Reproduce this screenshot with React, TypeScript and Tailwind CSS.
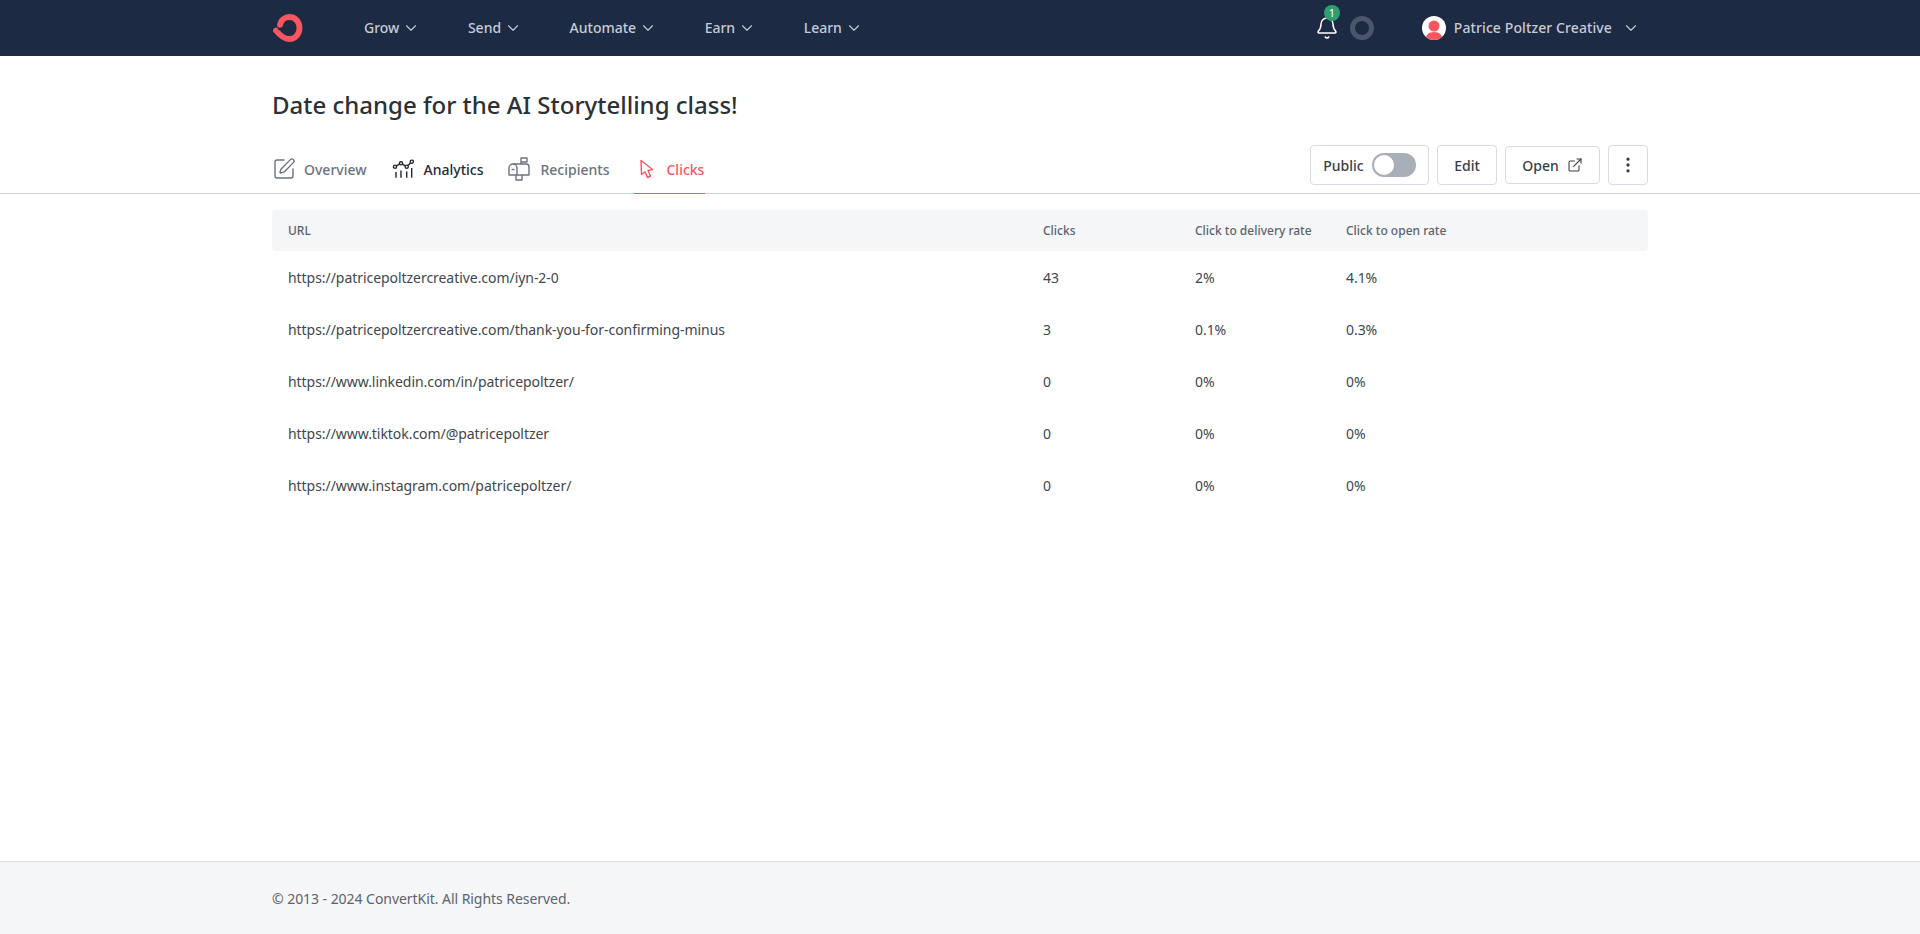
import React from 'react';
import { ChevronDown, Bell, SquarePen, MoreVertical, ExternalLink } from 'lucide-react';

const navItems = ['Grow', 'Send', 'Automate', 'Earn', 'Learn'];

const rows = [
  { url: 'https://patricepoltzercreative.com/iyn-2-0', clicks: '43', delivery: '2%', open: '4.1%' },
  { url: 'https://patricepoltzercreative.com/thank-you-for-confirming-minus', clicks: '3', delivery: '0.1%', open: '0.3%' },
  { url: 'https://www.linkedin.com/in/patricepoltzer/', clicks: '0', delivery: '0%', open: '0%' },
  { url: 'https://www.tiktok.com/@patricepoltzer', clicks: '0', delivery: '0%', open: '0%' },
  { url: 'https://www.instagram.com/patricepoltzer/', clicks: '0', delivery: '0%', open: '0%' },
];

function Logo() {
  return (
    <svg width="33" height="32" viewBox="0 0 33 32" fill="none">
      <path
        d="M8 13 C 9 7.500 13 5 17.500 5 C 23.500 5 27.500 10 27.500 16 C 27.500 22.500 23 27 17 27 C 12 27 8.500 24 4 18.500"
        stroke="#fb5660"
        strokeWidth="5.800"
        strokeLinecap="round"
        fill="none"
      />
      <path d="M11 15.800 L6.500 17" stroke="#1d2a44" strokeWidth="1.400" strokeLinecap="round" />
    </svg>
  );
}

function AnalyticsIcon() {
  return (
    <svg width="22" height="22" viewBox="0 0 22 22" fill="none" stroke="#1f2937" strokeWidth="1.4">
      <circle cx="3" cy="8.700" r="1.600" />
      <circle cx="9" cy="5.300" r="1.600" />
      <circle cx="14.700" cy="8.700" r="1.600" />
      <circle cx="19.800" cy="3.700" r="1.600" />
      <path d="M4.400 7.900 7.600 6.100M10.400 6.100l2.900 1.800M15.900 7.600l2.800-2.800" />
      <path d="M4 14v5.700M9 12.500v7.200M14.700 13.500v6.200M19.700 10v9.700" />
    </svg>
  );
}

function MailboxIcon() {
  return (
    <svg width="22" height="24" viewBox="0 0 22 24" fill="none" stroke="#6b7280" strokeWidth="1.4" strokeLinejoin="round">
      <path d="M5 7h13a3 3 0 0 1 3 3v8H1v-7a4 4 0 0 1 4-4Z" />
      <path d="M5 7a4 4 0 0 1 4 4v7" />
      <path d="M13 7V1h6v4h-6" />
      <path d="M8 18v5h6v-5" />
      <path d="M3.500 12.500h3" />
    </svg>
  );
}

function PointerIcon() {
  return (
    <svg width="18" height="20" viewBox="0 0 18 20" fill="none" stroke="#fb5660" strokeWidth="1.4" strokeLinejoin="round">
      <path d="M3 1.500 14.500 10.500 10 11.500 12.500 17 9.500 18.500 7 12.800 3.500 15.500Z" />
    </svg>
  );
}

function UserAvatar() {
  return (
    <div className="w-6 h-6 rounded-full bg-white overflow-hidden flex items-center justify-center">
      <svg width="24" height="24" viewBox="0 0 24 24">
        <circle cx="12" cy="10" r="5.500" fill="#fb5660" />
        <path d="M3.500 24c0-5 3-8 8.500-8s8.500 3 8.500 8Z" fill="#fb5660" />
      </svg>
    </div>
  );
}

function Tab({ icon, label, color, active }: { icon: React.ReactNode; label: string; color: string; active?: boolean }) {
  return (
    <div className={`h-[49px] flex items-center gap-[10px] text-[14px] font-medium border-b ${active ? 'border-[#fb5660] pl-1 pr-px' : 'border-transparent'} ${color}`}>
      {icon}
      <span>{label}</span>
    </div>
  );
}

export default function App() {
  return (
    <div className="min-h-[934px] flex flex-col bg-white font-['Noto_Sans','Open_Sans',sans-serif] text-[#40474e]">
      {/* Top nav */}
      <header className="h-[56px] bg-[#1d2a44] px-[272px] flex items-center">
        <div className="w-[92px] flex items-center">
          <Logo />
        </div>
        <nav className="flex items-center gap-[47.5px]">
          {navItems.map((item) => (
            <div key={item} className="flex items-center gap-[3px] text-[14px] font-medium text-[#c6cbd4]">
              <span className="-mt-[2px]">{item}</span>
              <ChevronDown className="w-[18px] h-[18px]" strokeWidth={1.5} />
            </div>
          ))}
        </nav>
        <div className="ml-auto flex items-center">
          <div className="relative mr-[11px]">
            <Bell className="w-6 h-6 text-white" strokeWidth={1.5} />
            <span className="absolute -top-[11px] left-[9px] w-4 h-4 rounded-full bg-[#2f9e73] text-white text-[11px] leading-4 text-center">1</span>
          </div>
          <div className="w-6 h-6 rounded-full border-[5px] border-[#4b566b] mr-[48px]" />
          <UserAvatar />
          <span className="ml-2 -mt-[2px] text-[14px] font-medium text-[#c6cbd4] tracking-[0.1px]">Patrice Poltzer Creative</span>
          <ChevronDown className="w-[18px] h-[18px] ml-[10px] mr-[8px] text-[#c6cbd4]" strokeWidth={1.5} />
        </div>
      </header>

      {/* Broadcast heading */}
      <div className="px-[272px] pt-[32px]">
        <h1 className="text-[24px] leading-[34px] font-medium text-[#2b3138]">Date change for the AI Storytelling class!</h1>
      </div>

      {/* Tabs and actions */}
      <div className="mt-[23px] px-[272px] h-[49px] border-b border-[#cfd2d6] flex items-start justify-between">
        <div className="flex items-center gap-[25px]">
          <Tab icon={<SquarePen className="w-6 h-6 -mr-[2px]" strokeWidth={1.4} />} label="Overview" color="text-[#6b7280]" />
          <Tab icon={<AnalyticsIcon />} label="Analytics" color="text-[#1f2937]" />
          <Tab icon={<MailboxIcon />} label="Recipients" color="text-[#6b7280]" />
          <Tab icon={<PointerIcon />} label="Clicks" color="text-[#fb5660]" active />
        </div>
        <div className="flex items-center gap-2 text-[14px] font-medium text-[#373f45]">
          <div className="h-10 w-[119px] border border-[#d8dce4] rounded flex items-center justify-center gap-2">
            <span>Public</span>
            <div className="w-[44px] h-6 rounded-full bg-[#a9afb9] p-[2px]">
              <div className="w-5 h-5 rounded-full bg-white" />
            </div>
          </div>
          <div className="h-10 w-[60px] border border-[#d8dce4] rounded flex items-center justify-center">Edit</div>
          <div className="h-[38px] w-[95px] border border-[#d8dce4] rounded flex items-center justify-center gap-2">
            <span>Open</span>
            <ExternalLink className="w-4 h-4" strokeWidth={1.6} />
          </div>
          <div className="h-10 w-10 border border-[#d8dce4] rounded flex items-center justify-center">
            <MoreVertical className="w-5 h-5" strokeWidth={2} />
          </div>
        </div>
      </div>

      {/* Clicks table */}
      <main className="flex-1 px-[272px] pt-[16px]">
        <div className="h-[41px] bg-[#f5f6f8] rounded grid grid-cols-[755px_152px_151px_1fr] items-center pl-4 text-[12px] font-medium text-[#5c636c]">
          <div>URL</div>
          <div>Clicks</div>
          <div>Click to delivery rate</div>
          <div>Click to open rate</div>
        </div>
        {rows.map((row) => (
          <div key={row.url} className="h-[52px] grid grid-cols-[755px_152px_151px_1fr] items-center pl-4 text-[14px] tracking-[-0.05px]">
            <div>{row.url}</div>
            <div>{row.clicks}</div>
            <div>{row.delivery}</div>
            <div>{row.open}</div>
          </div>
        ))}
      </main>

      {/* Footer */}
      <footer className="h-[73px] bg-[#f5f6f8] border-t border-[#dcdfe4] px-[272px] flex items-center text-[14px] tracking-[-0.05px] text-[#5c636c]">
        © 2013 - 2024 ConvertKit. All Rights Reserved.
      </footer>
    </div>
  );
}
